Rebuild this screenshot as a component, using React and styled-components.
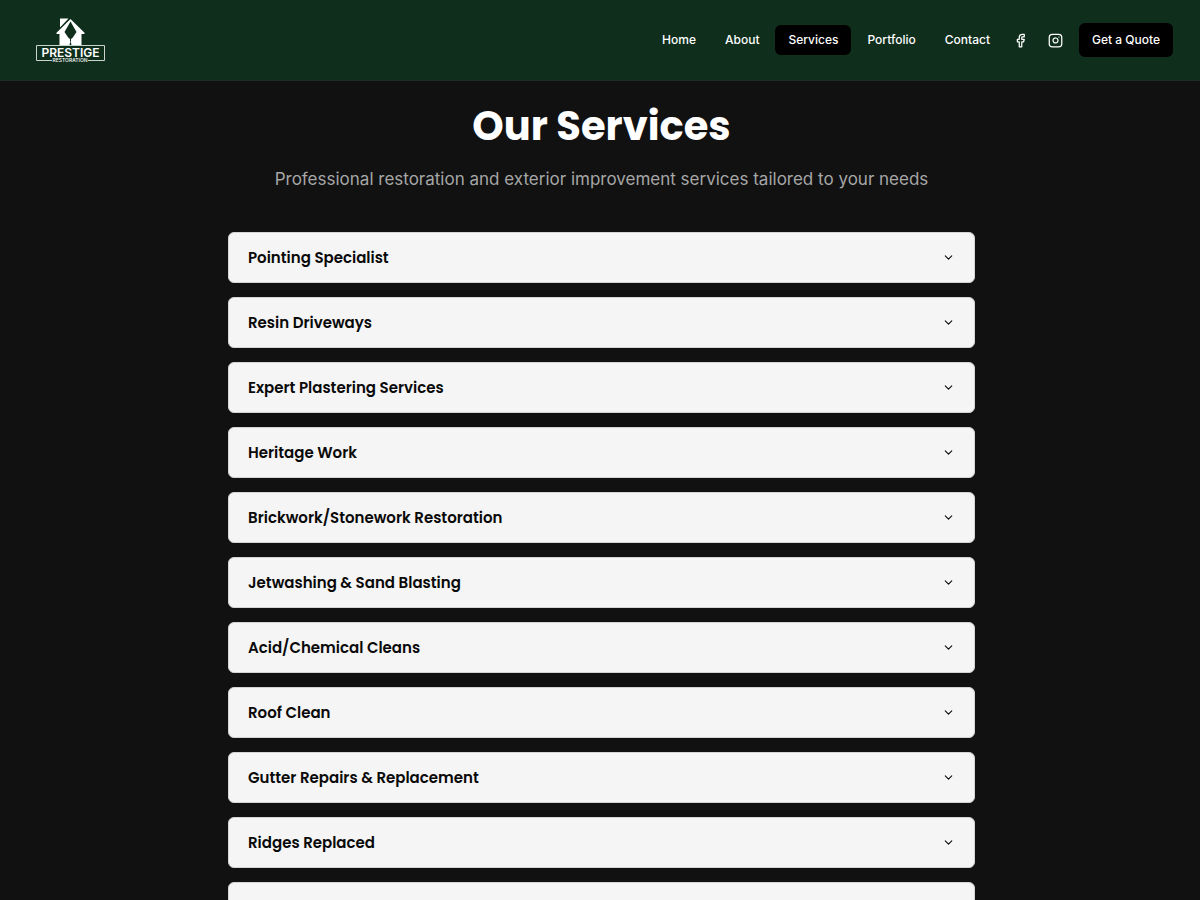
import React, { useState } from 'react';
import styled, { createGlobalStyle } from 'styled-components';
import { ChevronDown, Facebook, Instagram } from 'lucide-react';

const links = ['Home', 'About', 'Services', 'Portfolio', 'Contact'];

const services = [
  'Pointing Specialist',
  'Resin Driveways',
  'Expert Plastering Services',
  'Heritage Work',
  'Brickwork/Stonework Restoration',
  'Jetwashing & Sand Blasting',
  'Acid/Chemical Cleans',
  'Roof Clean',
  'Gutter Repairs & Replacement',
  'Ridges Replaced',
  'Lead Work',
];

const Logo = () => (
  <svg width="70" height="46" viewBox="0 0 70 46" role="img" aria-label="Prestige Restoration">
    {/* chimney, split from the roof by a thin gap */}
    <path d="M24 1.500h8.500L24 10.500z" fill="#fff" />
    {/* house */}
    <path d="M34.500 2 48.500 15.800V17H45.500V28H23.500V17H20.500V15.800z" fill="#fff" />
    <path d="M23.500 11.800 33 2.200" stroke="#0f2e1c" strokeWidth="0.8" />
    {/* trowel cut out of the front */}
    <path d="M34.500 4.500 40.500 15 36.800 20.500 34.500 22.500 32.200 20.500 28.500 15z" fill="#0f2e1c" />
    <path d="M34 22h1v2.500h-1z" fill="#0f2e1c" />
    <path d="M34.500 24 35.500 28h-2z" fill="#0f2e1c" />
    <path d="M16 43.500H.5v-15h68v15H52" fill="none" stroke="#c9d5cc" strokeWidth="1" />
    <text x="34.500" y="40" textAnchor="middle" fill="#fff" fontFamily="Inter, sans-serif" fontWeight="600" fontSize="12">PRESTIGE</text>
    <text x="34" y="45" textAnchor="middle" fill="#fff" fontFamily="Inter, sans-serif" fontWeight="500" fontSize="5">RESTORATION</text>
  </svg>
);

const App = () => {
  const [open, setOpen] = useState(null);

  return (
    <>
      <GlobalStyle />
      <Header>
        <LogoLink href="#home">
          <Logo />
        </LogoLink>
        <Nav>
          <LinkGroup>
            {links.map((link) => (
              <NavLink key={link} href={`#${link.toLowerCase()}`} $active={link === 'Services'}>
                {link}
              </NavLink>
            ))}
          </LinkGroup>
          <SocialGroup>
            <SocialLink href="#facebook" aria-label="Facebook">
              <Facebook size={15} />
            </SocialLink>
            <SocialLink href="#instagram" aria-label="Instagram">
              <Instagram size={15} />
            </SocialLink>
          </SocialGroup>
          <QuoteButton type="button">Get a Quote</QuoteButton>
        </Nav>
      </Header>
      <Main>
        <Title>Our Services</Title>
        <Subtitle>Professional restoration and exterior improvement services tailored to your needs</Subtitle>
        <ServiceList>
          {services.map((service, index) => (
            <ServiceCard key={service}>
              <h2>
                <ServiceButton
                  type="button"
                  aria-expanded={open === index}
                  onClick={() => setOpen(open === index ? null : index)}
                >
                  {service}
                  <Chevron size={13} $open={open === index} />
                </ServiceButton>
              </h2>
              {open === index && <Details>Contact us for a free quote.</Details>}
            </ServiceCard>
          ))}
        </ServiceList>
      </Main>
    </>
  );
};

export default App;

const GlobalStyle = createGlobalStyle`
  * {
    box-sizing: border-box;
  }

  body {
    margin: 0;
    background: #111;
    color: #fff;
    font-family: Inter, sans-serif;
  }

  h1, h2, p {
    margin: 0;
  }

  button {
    border: 0;
    cursor: pointer;
  }
`;

const Header = styled.header`
  display: flex;
  align-items: center;
  justify-content: space-between;
  min-height: 81px;
  padding: 0 27px 0 36px;
  background: #0f2e1c;
  border-bottom: 1px solid #222a24;
`;

const LogoLink = styled.a`
  display: flex;
`;

const Nav = styled.nav`
  display: flex;
  align-items: center;
`;

const LinkGroup = styled.div`
  display: flex;
  gap: 3px;
  margin-right: 2px;
`;

const SocialGroup = styled.div`
  display: flex;
  gap: 4px;
  margin-right: 8px;
`;

const NavLink = styled.a`
  padding: 7px 13px;
  border-radius: 6px;
  background: ${(props) => (props.$active ? '#000' : 'transparent')};
  color: #fff;
  font-size: 12px;
  font-weight: 500;
  line-height: 16px;
  text-decoration: none;
`;

const SocialLink = styled.a`
  display: flex;
  padding: 8px;
  color: #fff;
`;

const QuoteButton = styled.button`
  padding: 9px 13px;
  border-radius: 6px;
  background: #000;
  color: #fff;
  font-family: inherit;
  font-size: 12px;
  font-weight: 500;
  line-height: 16px;
`;

const Main = styled.main`
  padding: 21px 24px 60px 27px;
`;

const Title = styled.h1`
  font-family: Poppins, Inter, sans-serif;
  font-size: 40px;
  font-weight: 700;
  line-height: 48px;
  text-align: center;
`;

const Subtitle = styled.p`
  margin-top: 15px;
  color: #a6a6a6;
  font-size: 17px;
  line-height: 28px;
  text-align: center;
`;

const ServiceList = styled.div`
  display: flex;
  flex-direction: column;
  gap: 14px;
  max-width: 747px;
  margin: 39px auto 0;
`;

const ServiceCard = styled.section`
  border: 1px solid #d4d4d4;
  border-radius: 6px;
  background: #f5f5f5;
  color: #0a0a0a;
`;

const ServiceButton = styled.button`
  display: flex;
  align-items: center;
  justify-content: space-between;
  width: 100%;
  padding: 12px 19px;
  background: transparent;
  color: inherit;
  font-family: Poppins, Inter, sans-serif;
  font-size: 15px;
  font-weight: 600;
  line-height: 25px;
  text-align: left;
`;

const Chevron = styled(ChevronDown)`
  transform: ${(props) => (props.$open ? 'rotate(180deg)' : 'none')};
`;

const Details = styled.p`
  padding: 0 19px 16px;
  font-size: 15px;
  line-height: 24px;
`;
